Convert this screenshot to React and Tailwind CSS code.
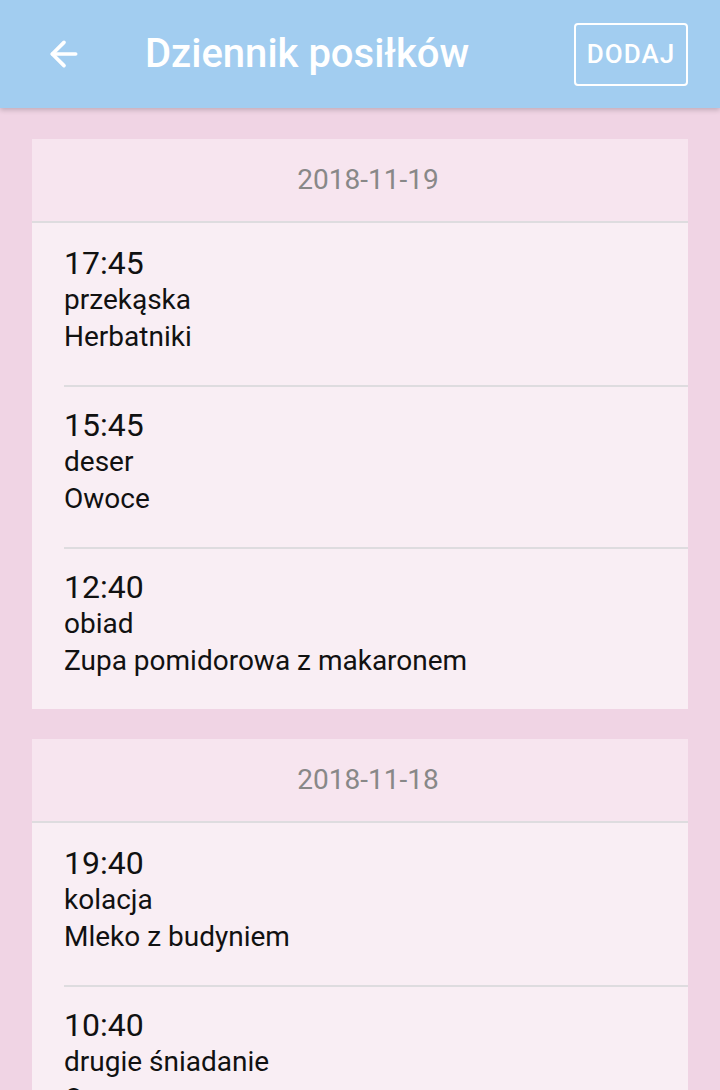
import { ArrowLeft } from 'lucide-react';

const days = [
  {
    date: '2018-11-19',
    meals: [
      { time: '17:45', type: 'przekąska', name: 'Herbatniki' },
      { time: '15:45', type: 'deser', name: 'Owoce' },
      { time: '12:40', type: 'obiad', name: 'Zupa pomidorowa z makaronem' },
    ],
  },
  {
    date: '2018-11-18',
    meals: [
      { time: '19:40', type: 'kolacja', name: 'Mleko z budyniem' },
      { time: '10:40', type: 'drugie śniadanie', name: 'Owoce' },
      { time: '08:10', type: 'śniadanie', name: 'Kanapki z serem' },
    ],
  },
];

function MealRow({ meal, first }) {
  return (
    <div className="relative pl-8 pt-[22px] pb-[30px]">
      {!first && <div className="absolute left-8 right-0 top-0 h-[2px] bg-[#dedcdf]" />}
      <div className="text-[32px] leading-[36px] text-[#111]">{meal.time}</div>
      <div className="text-[28px] leading-[37px] text-[#111]">{meal.type}</div>
      <div className="text-[28px] leading-[37px] text-[#111]">{meal.name}</div>
    </div>
  );
}

function DayCard({ day }) {
  return (
    <div className="bg-[#f9eef4]">
      <div className="h-[84px] flex items-center justify-center pl-4 bg-[#f7e5ef] border-b-2 border-[#dedcdf] text-[28px] text-[#888]">
        {day.date}
      </div>
      {day.meals.map((m, i) => (
        <MealRow key={i} meal={m} first={i === 0} />
      ))}
    </div>
  );
}

export default function App() {
  return (
    <div className="h-[1090px] overflow-hidden bg-[#f0d4e4] font-['Roboto',sans-serif]">
      <header className="relative z-10 h-[108px] bg-[#a2cdf0] flex items-center shadow-[0_2px_5px_rgba(0,0,0,0.2)]">
        <ArrowLeft className="ml-[44px] w-[40px] h-[40px] text-white" strokeWidth={2.2} />
        <h1 className="ml-[61px] text-[40px] font-medium text-white leading-none">Dziennik posiłków</h1>
        <button className="ml-auto mr-8 w-[114px] h-[63px] border-2 border-white rounded-[4px] text-white text-[26px] font-medium tracking-[0.04em]">
          DODAJ
        </button>
      </header>
      <main className="px-8 pt-[31px] flex flex-col gap-[30px]">
        {days.map((d) => (
          <DayCard key={d.date} day={d} />
        ))}
      </main>
    </div>
  );
}
